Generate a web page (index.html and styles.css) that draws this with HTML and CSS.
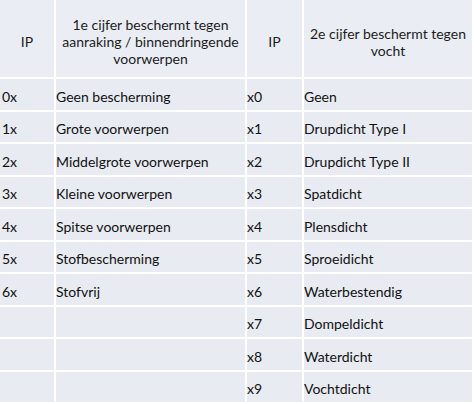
FILE: index.html
```html
<!DOCTYPE html>
<html lang="nl">
<head>
<meta charset="utf-8">
<link rel="stylesheet" href="styles.css">
</head>
<body>
<div class="table">
  <div class="cell head">IP</div>
  <div class="cell head">1e cijfer beschermt tegen aanraking / binnendringende voorwerpen</div>
  <div class="cell head">IP</div>
  <div class="cell head">2e cijfer beschermt tegen vocht</div>

  <div class="cell code">0x</div><div class="cell">Geen bescherming</div><div class="cell">x0</div><div class="cell">Geen</div>
  <div class="cell code">1x</div><div class="cell">Grote voorwerpen</div><div class="cell">x1</div><div class="cell">Drupdicht Type I</div>
  <div class="cell code">2x</div><div class="cell">Middelgrote voorwerpen</div><div class="cell">x2</div><div class="cell">Drupdicht Type II</div>
  <div class="cell code">3x</div><div class="cell">Kleine voorwerpen</div><div class="cell">x3</div><div class="cell">Spatdicht</div>
  <div class="cell code">4x</div><div class="cell">Spitse voorwerpen</div><div class="cell">x4</div><div class="cell">Plensdicht</div>
  <div class="cell code">5x</div><div class="cell">Stofbescherming</div><div class="cell">x5</div><div class="cell">Sproeidicht</div>
  <div class="cell code">6x</div><div class="cell">Stofvrij</div><div class="cell">x6</div><div class="cell">Waterbestendig</div>
  <div class="cell code"></div><div class="cell"></div><div class="cell">x7</div><div class="cell">Dompeldicht</div>
  <div class="cell code"></div><div class="cell"></div><div class="cell">x8</div><div class="cell">Waterdicht</div>
  <div class="cell code"></div><div class="cell"></div><div class="cell">x9</div><div class="cell">Vochtdicht</div>
</div>
</body>
</html>
```

FILE: styles.css
```css
html, body {
  margin: 0;
  padding: 0;
  background: #ffffff;
}

body {
  width: 474px;
  height: 404px;
  overflow: hidden;
  font-family: Lato, "Open Sans", sans-serif;
  font-size: 14px;
  color: #111111;
}

.table {
  display: grid;
  grid-template-columns: 54px 189px 55px 168px;
  grid-template-rows: 77px repeat(10, 30.5px);
  gap: 2px;
  width: 472px;
  height: 402px;
}

.cell {
  background: #e8ebf2;
  display: flex;
  align-items: center;
  padding: 4px 0 0 0;
  box-sizing: border-box;
  white-space: nowrap;
}

.code {
  padding-left: 2px;
}

.head {
  background: #eaedf4;
  justify-content: center;
  text-align: center;
  white-space: normal;
  line-height: 17px;
  padding: 6px 4px 0 4px;
  color: #1c1c1c;
}
```
